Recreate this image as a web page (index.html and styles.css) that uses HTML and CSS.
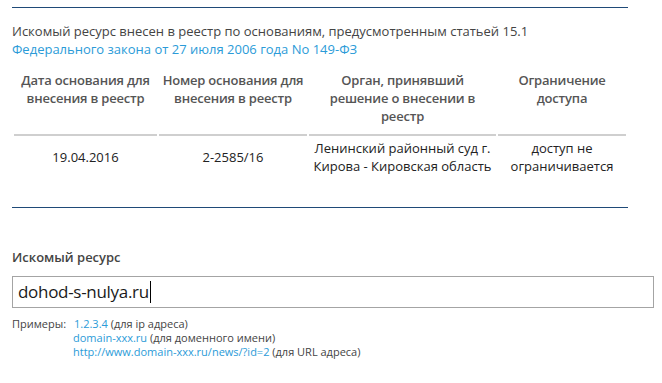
FILE: index.html
```html
<!DOCTYPE html>
<html lang="ru">
<head>
    <meta charset="UTF-8">
    <title>Проверка ресурса</title>
    <link rel="stylesheet" href="styles.css">
</head>
<body>
    <div class="page">
        <div class="block">
            <p class="note">
                Искомый ресурс внесен в реестр по основаниям, предусмотренным статьей 15.1
                <a href="#">Федерального закона от 27 июля 2006 года No 149-ФЗ</a>
            </p>
            <table class="grounds">
                <colgroup>
                    <col class="c1">
                    <col class="c2">
                    <col class="c3">
                    <col class="c4">
                </colgroup>
                <thead>
                    <tr>
                        <th>Дата основания для внесения в реестр</th>
                        <th>Номер основания для внесения в реестр</th>
                        <th class="organ">Орган, принявший решение о внесении в реестр</th>
                        <th>Ограничение доступа</th>
                    </tr>
                </thead>
                <tbody>
                    <tr>
                        <td>19.04.2016</td>
                        <td>2-2585/16</td>
                        <td>Ленинский районный суд г. Кирова - Кировская область</td>
                        <td>доступ не ограничивается</td>
                    </tr>
                </tbody>
            </table>
        </div>

        <div class="search">
            <label class="label">Искомый ресурс</label>
            <div class="field">dohod-s-nulya.ru<span class="caret"></span></div>
            <div class="examples">
                <span class="examples-title">Примеры:</span>
                <ul>
                    <li><a href="#">1.2.3.4</a> (для ip адреса)</li>
                    <li><a href="#">domain-xxx.ru</a> (для доменного имени)</li>
                    <li><a href="#">http://www.domain-xxx.ru/news/?id=2</a> (для URL адреса)</li>
                </ul>
            </div>
        </div>
    </div>
</body>
</html>
```

FILE: styles.css
```css
body,p,ul,li{
    margin: 0;
    padding: 0;
}
body{
    font-family: "Open Sans", "Liberation Sans", sans-serif;
    color: #444;
    background: #fff;
}
a{
    color: #2b9bd8;
    text-decoration: none;
}
.page{
    padding: 7px 0 0 12px;
}
.block{
    width: 616px;
    border-top: 1px solid #1f4a78;
    border-bottom: 1px solid #1f4a78;
}
.note{
    margin-top: 14px;
    font-size: 13px;
    line-height: 18px;
}
.note a{
    display: block;
}
.grounds{
    width: 616px;
    table-layout: fixed;
    border-collapse: separate;
    border-spacing: 2px;
    margin-top: 8px;
    font-size: 13px;
    line-height: 18px;
}
.c1{ width: 143px; }
.c2{ width: 148px; }
.c3{ width: 187px; }
.c4{ width: 128px; }
.grounds th{
    font-weight: 600;
    color: #555;
    padding: 3px 0 9px;
    letter-spacing: -0.2px;
    border-bottom: 2px solid #cfcfcf;
    vertical-align: top;
}
.grounds th.organ{
    padding: 3px 12px 9px;
}
.grounds td{
    color: #222;
    text-align: center;
    padding: 1px 2px 30px;
    vertical-align: middle;
}
.search{
    padding-top: 40px;
}
.label{
    display: block;
    font-size: 13px;
    line-height: 18px;
    font-weight: 600;
    color: #444;
}
.field{
    width: 635px;
    height: 30px;
    margin-top: 10px;
    padding-left: 5px;
    border: 1px solid #a4a4a4;
    font-size: 17px;
    letter-spacing: -0.3px;
    line-height: 30px;
    color: #1a1a1a;
}
.caret{
    display: inline-block;
    width: 1px;
    height: 22px;
    margin-left: 1px;
    background: #000;
    vertical-align: -5px;
}
.examples{
    display: flex;
    margin-top: 9px;
    font-size: 11px;
    line-height: 14px;
    color: #444;
}
.examples-title{
    width: 61px;
}
.examples ul{
    list-style: none;
}
.examples li:first-child{
    padding-left: 1px;
}
```
